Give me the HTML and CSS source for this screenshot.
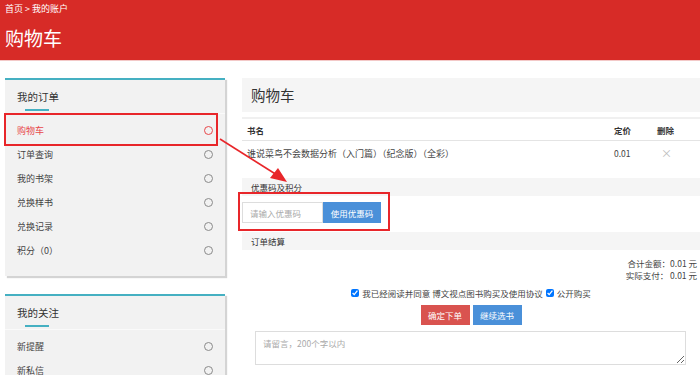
FILE: index.html
```html
<!DOCTYPE html>
<html lang="zh-CN">
<head>
    <meta charset="UTF-8">
    <meta name="viewport" content="width=device-width, initial-scale=1.0">
    <title>购物车</title>
    <link rel="stylesheet" href="styles.css">
</head>
<body>
    <div class="header">
        <div class="breadcrumb">首页 &gt; 我的账户</div>
        <div class="header-title">购物车</div>
    </div>
    <div class="content">
        <div class="sidebar">
            <div class="panel">
                <div class="panel-head">我的订单</div>
                <ul class="panel-list">
                    <li class="active">购物车<span class="dot"></span></li>
                    <li>订单查询<span class="dot"></span></li>
                    <li>我的书架<span class="dot"></span></li>
                    <li>兑换样书<span class="dot"></span></li>
                    <li>兑换记录<span class="dot"></span></li>
                    <li>积分（0）<span class="dot"></span></li>
                </ul>
            </div>
            <div class="panel">
                <div class="panel-head">我的关注</div>
                <ul class="panel-list">
                    <li>新提醒<span class="dot"></span></li>
                    <li>新私信<span class="dot"></span></li>
                </ul>
            </div>
        </div>
        <div class="main">
            <div class="main-title">购物车</div>
            <table class="cart">
                <thead>
                    <tr>
                        <th>书名</th>
                        <th class="col-price">定价</th>
                        <th class="col-del">删除</th>
                    </tr>
                </thead>
                <tbody>
                    <tr>
                        <td class="book">谁说菜鸟不会数据分析（入门篇）（纪念版）（全彩）</td>
                        <td class="col-price">0.01</td>
                        <td class="col-del"><span class="del">×</span></td>
                    </tr>
                </tbody>
            </table>
            <div class="section-bar">优惠码及积分</div>
            <div class="coupon">
                <input type="text" placeholder="请输入优惠码">
                <button class="btn btn-blue">使用优惠码</button>
            </div>
            <div class="section-bar section-bar-tight">订单结算</div>
            <div class="totals">
                <div>合计金额：0.01 元</div>
                <div>实际支付： 0.01 元</div>
            </div>
            <div class="agree">
                <label><input type="checkbox" checked> 我已经阅读并同意 博文视点图书购买及使用协议</label>
                <label><input type="checkbox" checked> 公开购买</label>
            </div>
            <div class="actions">
                <button class="btn btn-red">确定下单</button>
                <button class="btn btn-blue">继续选书</button>
            </div>
            <textarea class="note" placeholder="请留言，200个字以内"></textarea>
        </div>
    </div>

    <!-- annotation overlays -->
    <div class="mark mark-menu"></div>
    <div class="mark mark-coupon"></div>
    <svg class="arrow" width="700" height="375" viewBox="0 0 700 375">
        <line x1="220" y1="139" x2="277" y2="175" stroke="#e8262a" stroke-width="1.6" />
        <polygon points="287,182 270,178 278,168" fill="#e8262a" />
    </svg>
</body>
</html>
```

FILE: styles.css
```css
body {
    margin: 0;
    font-family: "Noto Sans CJK SC", "Liberation Sans", sans-serif;
    background: #fff;
    color: #333;
    width: 700px;
    height: 375px;
    overflow: hidden;
    position: relative;
}
.header {
    background-color: #d72b27;
    height: 60px;
    padding: 0 5px;
    color: #fff;
    border-bottom: 1px solid #f3c9c8;
}
.breadcrumb {
    font-size: 9px;
    line-height: 12px;
    padding-top: 3px;
}
.header-title {
    font-size: 19px;
    line-height: 24px;
    padding-top: 11px;
}
.content {
    display: flex;
    gap: 17px;
    padding: 17px 0 0 5px;
}
.sidebar {
    width: 220px;
    flex-shrink: 0;
    display: flex;
    flex-direction: column;
    gap: 18px;
}
.panel {
    background: #f2f2f2;
    border-top: 2px solid #45b0c2;
    box-shadow: 2px 2px 1px #d4d4d4;
    padding-bottom: 14px;
}
.panel-head {
    height: 33px;
    line-height: 33px;
    padding-left: 12px;
    font-size: 10.5px;
    color: #333;
    position: relative;
    border-bottom: 1px solid #fafafa;
}
.panel-head::after {
    content: "";
    position: absolute;
    left: 20px;
    bottom: 2px;
    width: 24px;
    height: 2px;
    background: #45b0c2;
}
.panel-list {
    list-style: none;
    margin: 0;
    padding: 4px 0 0 0;
}
.panel-list li {
    height: 24px;
    display: flex;
    align-items: center;
    justify-content: space-between;
    padding: 0 12px 0 12px;
    font-size: 9px;
    color: #444;
}
.panel-list li.active {
    color: #e8474a;
}
.dot {
    width: 7px;
    height: 7px;
    border: 1px solid #8a8a8a;
    border-radius: 50%;
}
.active .dot {
    border-color: #e8474a;
}
.main {
    flex: 1;
    display: flex;
    flex-direction: column;
}
.main-title {
    background: #f5f5f5;
    height: 34px;
    line-height: 34px;
    padding-left: 9px;
    font-size: 14.5px;
    color: #333;
}
.cart {
    width: 100%;
    border-collapse: collapse;
    margin-top: 5px;
    border-top: 2px solid #f0f0f0;
    font-size: 8.5px;
}
.cart th {
    text-align: left;
    font-weight: bold;
    height: 21px;
    padding: 0 5px;
    border-bottom: 1px solid #e4e4e4;
    color: #333;
}
.cart td {
    height: 24px;
    padding: 0 5px;
    color: #444;
}
.cart .book {
    font-size: 9px;
}
.cart .col-price {
    width: 33px;
}
.cart .col-del {
    width: 38px;
}
.del {
    color: #bbb;
    font-size: 11px;
    padding-left: 4px;
}
.section-bar {
    background: #f5f5f5;
    height: 18px;
    line-height: 18px;
    padding-left: 9px;
    font-size: 8.5px;
    color: #333;
    margin-top: 13px;
}
.section-bar-tight {
    margin-top: 9px;
}
.coupon {
    display: flex;
    margin-top: 6px;
    height: 21px;
}
.coupon input {
    width: 81px;
    box-sizing: border-box;
    border: 1px solid #ddd;
    padding: 0 7px;
    font-family: inherit;
    font-size: 8.5px;
    outline: none;
}
.coupon input::placeholder {
    color: #aaa;
}
.coupon .btn {
    width: 58px;
    height: 21px;
}
.btn {
    border: none;
    color: #fff;
    font-family: inherit;
    font-size: 8.5px;
    padding: 0;
    cursor: pointer;
}
.btn-blue {
    background: #4a90d9;
}
.btn-red {
    background: #d9534f;
}
.totals {
    text-align: right;
    font-size: 8.5px;
    line-height: 12px;
    padding: 7px 3px 0 0;
    color: #444;
}
.agree {
    display: flex;
    justify-content: center;
    gap: 3px;
    font-size: 8.5px;
    line-height: 12px;
    margin-top: 6px;
    color: #444;
}
.agree label {
    display: flex;
    align-items: center;
    gap: 3px;
}
.agree input {
    margin: 0;
    width: 8px;
    height: 8px;
}
.actions {
    display: flex;
    justify-content: center;
    gap: 3px;
    margin-top: 6px;
}
.actions .btn {
    width: 49px;
    height: 20px;
}
.note {
    margin: 6px 14px 0 13px;
    height: 34px;
    box-sizing: border-box;
    border: 1px solid #ddd;
    padding: 5px 7px;
    font-family: inherit;
    font-size: 8.5px;
    resize: vertical;
}
.note::placeholder {
    color: #aaa;
}
.mark {
    position: absolute;
    border: 2px solid #e8262a;
    box-sizing: border-box;
}
.mark-menu {
    left: 4px;
    top: 113px;
    width: 214px;
    height: 33px;
}
.mark-coupon {
    left: 238px;
    top: 192px;
    width: 152px;
    height: 39px;
}
.arrow {
    position: absolute;
    left: 0;
    top: 0;
    pointer-events: none;
}
```
